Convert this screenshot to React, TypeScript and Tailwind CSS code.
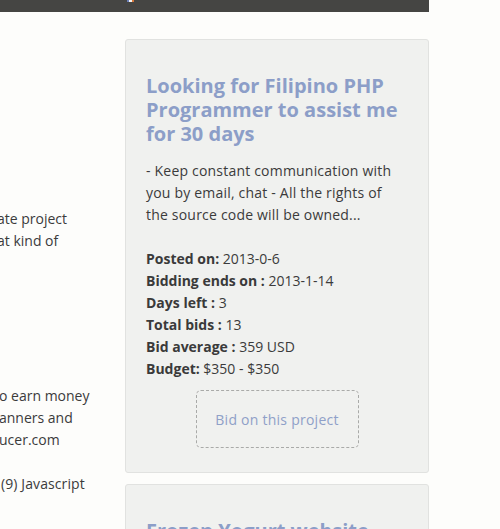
import React from "react";

const font = { fontFamily: '"Open Sans", "Noto Sans", sans-serif' };

function Detail({ label, value }: { label: string; value: string }) {
  return (
    <div>
      <span className="font-bold text-[#3a3a3a]">{label}</span> {value}
    </div>
  );
}

export default function App() {
  return (
    <div className="w-[500px] h-[529px] overflow-hidden bg-[#fdfdfb] text-[#3b3b3b]" style={font}>
      <div className="w-[429px] h-[12px] bg-[#454543] flex items-start">
        <div className="ml-[127px] flex h-[2px] w-[7px]">
          <div className="w-[2px] bg-[#6b7fb8]" />
          <div className="w-[3px] bg-[#f4f4f4]" />
          <div className="w-[2px] bg-[#d9783a]" />
        </div>
      </div>
      <div className="flex">
        <div className="w-[125px] shrink-0 overflow-hidden text-[14px] leading-[22px] whitespace-nowrap">
          <div className="h-[196px]" />
          <div className="-ml-[3px]">ate project</div>
          <div className="-ml-[3px]">at kind of</div>
          <div className="h-[133px]" />
          <div className="-ml-[1px]">o earn money</div>
          <div className="-ml-[1px]">anners and</div>
          <div className="-ml-[1px]">ucer.com</div>
          <div className="h-[22px]" />
          <div className="ml-[1px] tracking-[0.1px]">(9) Javascript</div>
        </div>
        <div className="w-[304px] shrink-0 flex flex-col gap-[11px] pt-[27px]">
          <div className="border border-[#e1e2e0] rounded-[3px] bg-[#f0f1ef] pt-[34px] pb-[24px] px-[20px]">
            <h3 className="text-[20px] leading-[24px] font-bold text-[#8c9ec8]">
              Looking for Filipino PHP Programmer to assist me for 30 days
            </h3>
            <p className="mt-[14px] mr-[6px] text-[14px] leading-[22px] tracking-[0.2px]">
              - Keep constant communication with you by email, chat - All the rights of the source code will be owned...
            </p>
            <div className="mt-[22px] text-[14px] leading-[22px]">
              <Detail label="Posted on:" value="2013-0-6" />
              <Detail label="Bidding ends on :" value="2013-1-14" />
              <Detail label="Days left :" value="3" />
              <Detail label="Total bids :" value="13" />
              <Detail label="Bid average :" value="359 USD" />
              <Detail label="Budget:" value="$350 - $350" />
            </div>
            <div className="mt-[10px] flex justify-center">
              <div className="w-[163px] h-[58px] flex items-center justify-center border border-dashed border-[#a9aaa8] rounded-[5px] text-[14px] tracking-[0.25px] text-[#8fa0c8]">
                Bid on this project
              </div>
            </div>
          </div>
          <div className="border border-[#e1e2e0] rounded-[3px] bg-[#f0f1ef] pt-[34px] pb-[24px] px-[20px]">
            <h3 className="text-[20px] leading-[24px] font-bold text-[#8c9ec8]">
              Frozen Yogurt website
            </h3>
          </div>
        </div>
      </div>
    </div>
  );
}
